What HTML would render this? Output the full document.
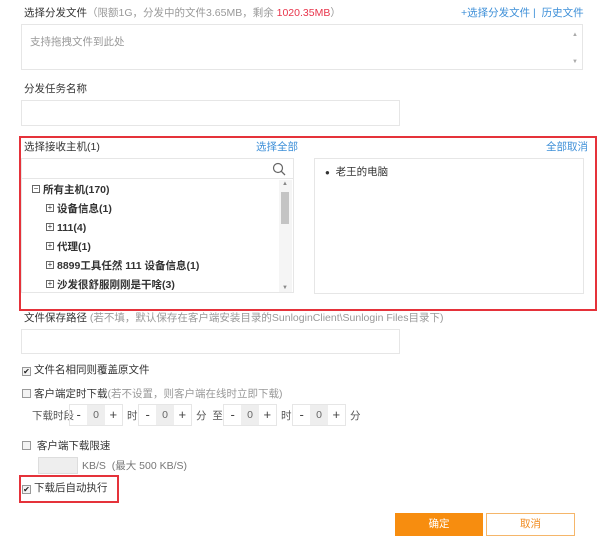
<!DOCTYPE html>
<html><head><meta charset="utf-8"><style>
*{margin:0;padding:0;box-sizing:border-box}
body{width:600px;height:550px;background:#fff;position:relative;overflow:hidden;font-family:"Liberation Sans","Noto Sans CJK SC",sans-serif;font-size:10.5px;line-height:14px;color:#333}
.a{position:absolute;white-space:nowrap}
.box{position:absolute;border:1px solid #e6e6e6;background:#fff}
.g{color:#999}
.blue{color:#3d8fd8}
.red{position:absolute;border:2px solid #e5323a}
.cb{display:inline-block;width:9px;height:9px;border:1px solid #999;background:#f3f3f3;vertical-align:-1px;margin-right:3px;position:relative;font-size:8px;line-height:7px;text-align:center;color:#222}
.st{position:absolute;top:404px;height:22px;width:54px;border:1px solid #e6e6e6;display:flex}
.st span{flex:1;text-align:center;line-height:20px;font-size:13px;color:#444}
.st span.m{background:#eee;font-size:10.5px;color:#666}
.tree{position:absolute;left:0;font-size:10.5px;line-height:14px;height:14px;color:#333;font-weight:bold}
.pl{display:inline-block;width:8px;height:8px;border:1px solid #666;font-size:8px;line-height:6px;text-align:center;margin-right:3px;font-weight:normal;vertical-align:middle;position:relative;top:-1px}
</style></head><body>
<div class="a" style="left:24px;top:6px;"><span>选择分发文件</span><span class="g">（限额1G，分发中的文件3.65MB，剩余 <span style="color:#e8344b">1020.35MB</span>）</span></div>
<div class="a blue" style="left:461px;top:6px;">+选择分发文件 | &nbsp;历史文件</div>
<div class="box" style="left:21px;top:24px;width:562px;height:46px;"><div class="a g" style="left:8px;top:10px;">支持拖拽文件到此处</div>
<div class="a" style="right:4px;top:3px;font-size:6px;color:#aaa">▲</div><div class="a" style="right:4px;bottom:0px;font-size:6px;color:#aaa">▼</div></div>
<div class="a" style="left:24px;top:82px;">分发任务名称</div>
<div class="box" style="left:21px;top:100px;width:379px;height:26px;"></div>

<div class="red" style="left:19px;top:136px;width:578px;height:175px;"></div>
<div class="a" style="left:24px;top:140px;">选择接收主机(1)</div>
<div class="a blue" style="left:256px;top:140px;">选择全部</div>
<div class="a blue" style="left:546px;top:140px;">全部取消</div>
<div class="box" style="left:21px;top:158px;width:273px;height:135px;">
 <div style="position:absolute;left:0;right:0;top:0;height:20px;border-bottom:1px solid #e6e6e6"></div>
 <svg class="a" style="left:250px;top:3px" width="14" height="14" viewBox="0 0 14 14"><circle cx="6" cy="6" r="4.5" fill="none" stroke="#666" stroke-width="1.2"/><line x1="9.3" y1="9.3" x2="13" y2="13" stroke="#666" stroke-width="1.3"/></svg>
 <div style="position:absolute;left:257px;top:21px;width:13px;bottom:0;background:#f5f5f5"><div style="position:absolute;left:2px;top:12px;width:8px;height:32px;background:#c4c4c4"></div><div class="a" style="left:3px;top:-3px;font-size:6px;color:#888">▲</div><div class="a" style="left:3px;bottom:-3px;font-size:6px;color:#888">▼</div></div>
 <div class="tree" style="left:10px;top:24px;"><span class="pl">−</span>所有主机(170)</div>
 <div class="tree" style="left:24px;top:43px;"><span class="pl">+</span>设备信息(1)</div>
 <div class="tree" style="left:24px;top:62px;"><span class="pl">+</span>111(4)</div>
 <div class="tree" style="left:24px;top:81px;"><span class="pl">+</span>代理(1)</div>
 <div class="tree" style="left:24px;top:100px;"><span class="pl">+</span>8899工具任然 111 设备信息(1)</div>
 <div class="tree" style="left:24px;top:119px;"><span class="pl">+</span>沙发很舒服刚刚是干啥(3)</div>
</div>
<div class="box" style="left:314px;top:158px;width:270px;height:136px;"><div class="a" style="left:10px;top:6px;"><span style="font-size:8px">●</span>&nbsp;&nbsp;老王的电脑</div></div>

<div class="a" style="left:24px;top:311px;"><span>文件保存路径</span><span class="g"> (若不填，默认保存在客户端安装目录的SunloginClient\Sunlogin Files目录下)</span></div>
<div class="box" style="left:21px;top:329px;width:379px;height:25px;"></div>
<div class="a" style="left:22px;top:363px;"><span class="cb">✔</span>文件名相同则覆盖原文件</div>
<div class="a" style="left:22px;top:387px;"><span class="cb"></span>客户端定时下载<span class="g">(若不设置，则客户端在线时立即下载)</span></div>
<div class="a" style="left:32px;top:409px;color:#555">下载时段</div>
<div class="st" style="left:69px"><span>-</span><span class="m">0</span><span>+</span></div>
<div class="a" style="left:127px;top:409px;color:#555">时</div>
<div class="st" style="left:138px"><span>-</span><span class="m">0</span><span>+</span></div>
<div class="a" style="left:196px;top:409px;color:#555">分 &nbsp;至</div>
<div class="st" style="left:223px"><span>-</span><span class="m">0</span><span>+</span></div>
<div class="a" style="left:281px;top:409px;color:#555">时</div>
<div class="st" style="left:292px"><span>-</span><span class="m">0</span><span>+</span></div>
<div class="a" style="left:350px;top:409px;color:#555">分</div>
<div class="a" style="left:22px;top:439px;"><span class="cb"></span>&nbsp;客户端下载限速</div>
<div style="position:absolute;left:38px;top:457px;width:40px;height:17px;background:#eee;border:1px solid #ddd"></div>
<div class="a" style="left:82px;top:459px;color:#777">KB/S &nbsp;(最大 500 KB/S)</div>
<div class="red" style="left:19px;top:475px;width:100px;height:28px;"></div>
<div class="a" style="left:22px;top:481px;"><span class="cb">✔</span>下载后自动执行</div>
<div class="a" style="left:395px;top:513px;width:88px;height:23px;background:#f78d0f;color:#fff;text-align:center;line-height:23px">确定</div>
<div class="a" style="left:486px;top:513px;width:89px;height:23px;border:1px solid #f5b66a;color:#f08a1c;text-align:center;line-height:21px">取消</div>
</body></html>
